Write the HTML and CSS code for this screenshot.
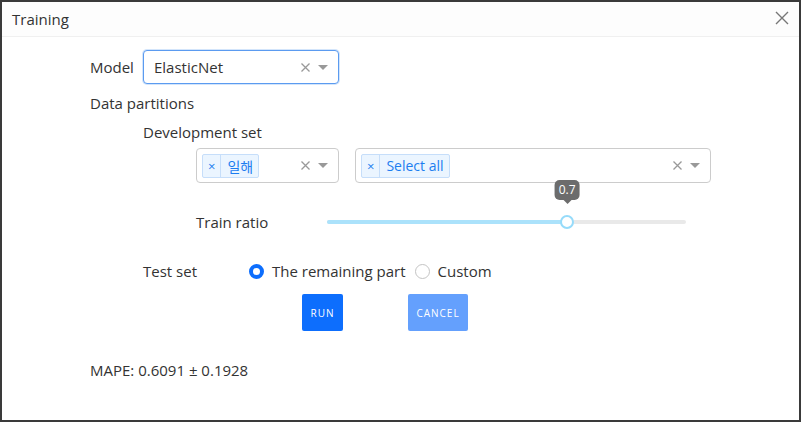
FILE: index.html
```html
<!DOCTYPE html>
<html>
<head>
<meta charset="utf-8">
<link rel="stylesheet" href="styles.css">
</head>
<body>
<div class="dialog">
  <div class="header">
    <span class="title">Training</span>
    <svg class="close" width="14" height="14" viewBox="0 0 14 14"><path d="M1 1L13 13M13 1L1 13" stroke="#777" stroke-width="1.4" fill="none"/></svg>
  </div>
  <div class="body">
    <div class="row model-row">
      <span class="label">Model</span>
      <div class="select focused model-select">
        <span class="value">ElasticNet</span>
        <span class="controls">
          <svg class="clear" width="9" height="9" viewBox="0 0 9 9"><path d="M0.5 0.5L8.5 8.5M8.5 0.5L0.5 8.5" stroke="#999" stroke-width="1.3"/></svg>
          <svg class="caret" width="10" height="5" viewBox="0 0 10 5"><path d="M0 0H10L5 5Z" fill="#999"/></svg>
        </span>
      </div>
    </div>
    <div class="section-title">Data partitions</div>
    <div class="sub-title">Development set</div>
    <div class="row selects-row">
      <div class="select small-select">
        <span class="tag"><span class="tag-x">×</span><span class="tag-label">일해</span></span>
        <span class="controls">
          <svg class="clear" width="9" height="9" viewBox="0 0 9 9"><path d="M0.5 0.5L8.5 8.5M8.5 0.5L0.5 8.5" stroke="#999" stroke-width="1.3"/></svg>
          <svg class="caret" width="10" height="5" viewBox="0 0 10 5"><path d="M0 0H10L5 5Z" fill="#999"/></svg>
        </span>
      </div>
      <div class="select wide-select">
        <span class="tag"><span class="tag-x">×</span><span class="tag-label">Select all</span></span>
        <span class="controls">
          <svg class="clear" width="9" height="9" viewBox="0 0 9 9"><path d="M0.5 0.5L8.5 8.5M8.5 0.5L0.5 8.5" stroke="#999" stroke-width="1.3"/></svg>
          <svg class="caret" width="10" height="5" viewBox="0 0 10 5"><path d="M0 0H10L5 5Z" fill="#999"/></svg>
        </span>
      </div>
    </div>
    <div class="row ratio-row">
      <span class="ratio-label">Train ratio</span>
      <div class="slider">
        <div class="rail"></div>
        <div class="track" style="width: 66.9%"></div>
        <div class="handle" style="left: 66.9%">
          <div class="tooltip">0.7</div>
        </div>
      </div>
    </div>
    <div class="row test-row">
      <span class="test-label">Test set</span>
      <label class="radio"><span class="dot checked"></span>The remaining part</label>
      <label class="radio"><span class="dot"></span>Custom</label>
    </div>
    <div class="row buttons-row">
      <button class="btn run">RUN</button>
      <button class="btn cancel">CANCEL</button>
    </div>
    <div class="result">MAPE: 0.6091 ± 0.1928</div>
  </div>
</div>
</body>
</html>
```
FILE: styles.css
```css
* { box-sizing: border-box; }
html, body { margin: 0; padding: 0; }
body {
  font-family: "Open Sans", "Noto Sans CJK KR", sans-serif;
  font-size: 15px;
  color: #333;
  background: #fff;
}
.dialog {
  width: 801px;
  height: 422px;
  border: 2px solid #3a3a3a;
  background: #fff;
}
.header {
  height: 35px;
  display: flex;
  align-items: center;
  justify-content: space-between;
  padding: 0 10px 0 10px;
  border-bottom: 1px solid #f0f0f0;
  background: #fdfdfd;
}
.title { font-size: 15px; color: #333; }
.close { margin-top: -2px; }
.body { padding-left: 88px; }
.row { display: flex; align-items: center; }
.model-row { margin-top: 13px; height: 34px; }
.label { width: 53px; }
.select {
  display: flex;
  align-items: center;
  justify-content: space-between;
  border: 1px solid #ccc;
  border-radius: 4px;
  background: #fff;
  padding: 0 10px 0 5px;
}
.focused { border-color: #5b9bf0; box-shadow: 0 0 0 1px rgba(80,150,240,0.25); }
.model-select { width: 196px; height: 34px; padding-left: 10px; }
.value { font-size: 15px; color: #333; }
.controls { display: flex; align-items: center; gap: 8px; }
.section-title { margin-top: 9px; line-height: 20px; }
.sub-title { margin-top: 9px; line-height: 20px; padding-left: 53px; }
.selects-row { margin-top: 6px; padding-left: 106px; gap: 16px; }
.small-select { width: 143px; height: 35px; }
.wide-select { width: 356px; height: 35px; }
.tag {
  display: flex;
  align-items: center;
  height: 24px;
  background: #ebf5ff;
  border: 1px solid #c6defa;
  border-radius: 2px;
  color: #1c7df0;
  font-size: 14px;
}
.tag-x {
  padding: 0 5px;
  border-right: 1px solid #c6defa;
  height: 100%;
  display: flex;
  align-items: center;
  font-size: 13px;
}
.tag-label { padding: 0 5px 0 6px; }
.ratio-row { margin-top: 29px; height: 20px; padding-left: 106px; }
.ratio-label { width: 131px; }
.slider { position: relative; width: 359px; height: 14px; }
.rail {
  position: absolute; left: 0; right: 0; top: 5px; height: 4px;
  background: #e9e9e9; border-radius: 2px;
}
.track {
  position: absolute; left: 0; top: 5px; height: 4px;
  background: #abe2fb; border-radius: 2px;
}
.handle {
  position: absolute; top: 0;
  width: 14px; height: 14px; margin-left: -7px;
  border: 2px solid #96dbfa; border-radius: 50%;
  background: #fff;
}
.tooltip {
  position: absolute;
  bottom: 27px; left: 50%;
  transform: translateX(-50%);
  background: #6c6c6c;
  color: #fff;
  font-size: 12px;
  line-height: 20px;
  padding: 0 4px;
  border-radius: 5px;
  min-width: 23px;
  text-align: center;
}
.tooltip::after {
  content: "";
  position: absolute;
  left: 50%; top: 100%;
  margin-left: -4px;
  border: 4px solid transparent;
  border-top-color: #6c6c6c;
  border-bottom: 0;
}
.test-row { margin-top: 29px; height: 20px; padding-left: 53px; }
.test-label { width: 106px; }
.radio { display: flex; align-items: center; margin-right: 9px; }
.dot {
  width: 15px; height: 15px; border-radius: 50%;
  border: 1px solid #c4c4c4; background: #fff;
  margin-right: 8px;
}
.dot.checked {
  border: 4px solid #0d6efd;
  background: #fff;
}
.buttons-row { margin-top: 13px; padding-left: 212px; gap: 65px; }
.btn {
  height: 37px;
  border: none;
  border-radius: 2px;
  color: #fff;
  font-family: "Open Sans", sans-serif;
  font-size: 10px;
  letter-spacing: 1px;
  padding: 0;
}
.run { width: 41px; background: #0d6efd; }
.cancel { width: 60px; background: #64a0fd; }
.result { margin-top: 29px; line-height: 20px; }
```
